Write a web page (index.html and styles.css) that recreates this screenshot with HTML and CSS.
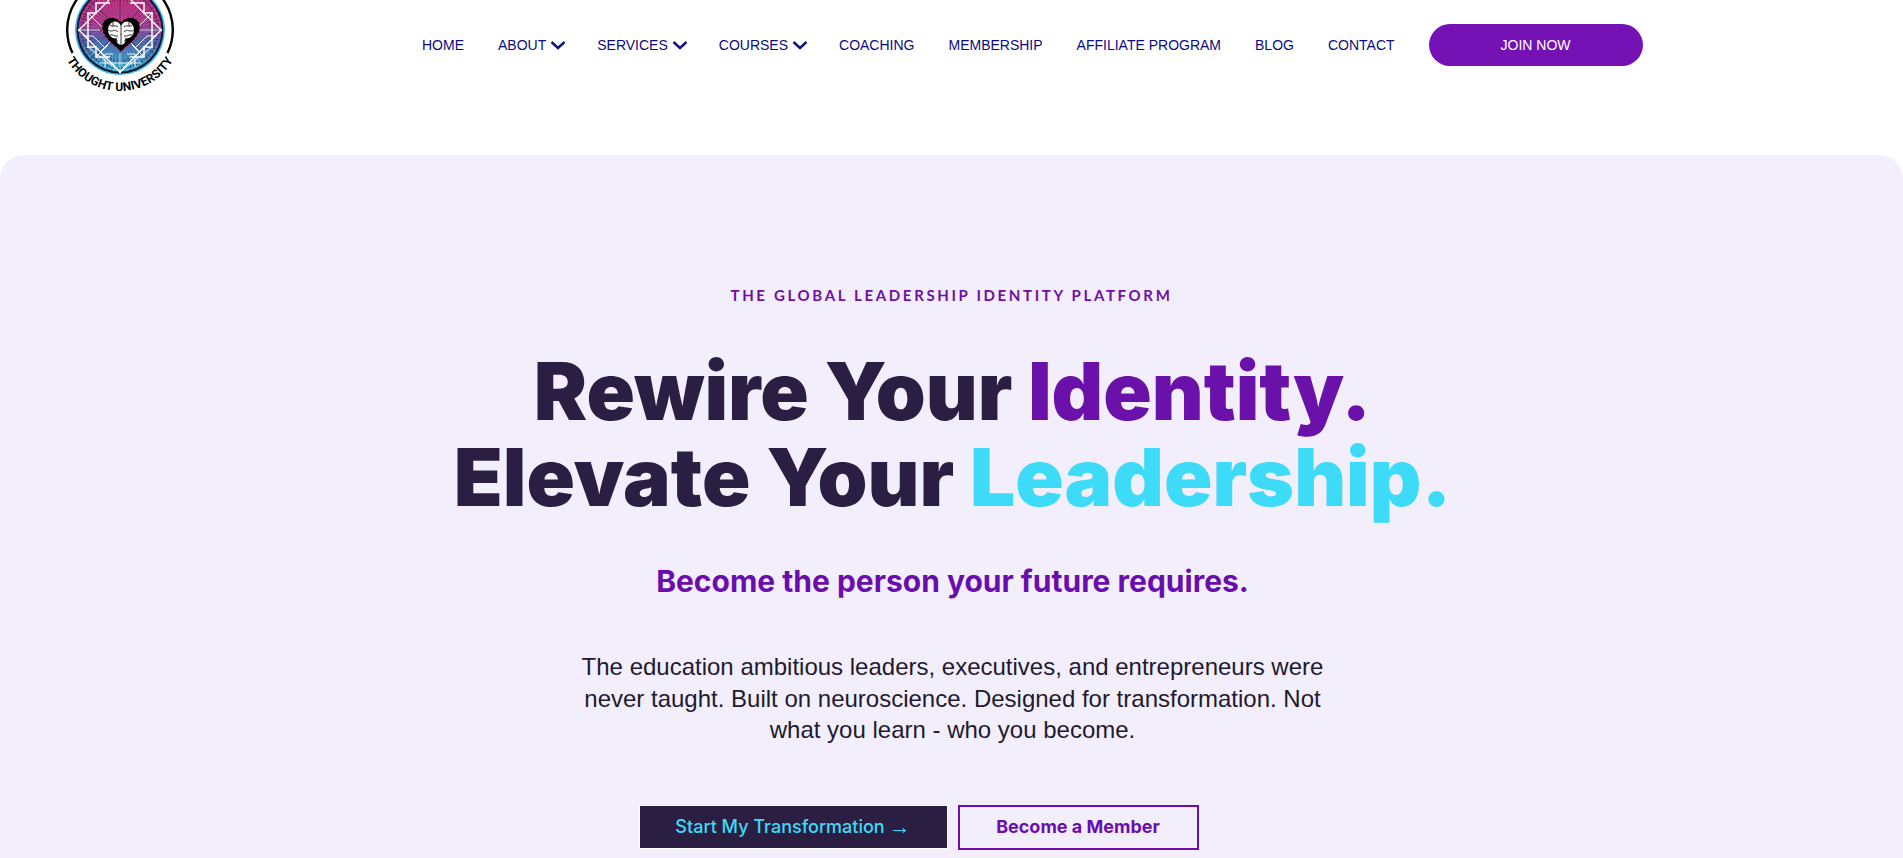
FILE: index.html
```html
<!DOCTYPE html>
<html lang="en">
<head>
<meta charset="utf-8">
<title>Thought University</title>
<link rel="stylesheet" href="styles.css">
</head>
<body>
<header class="site-header">
  <a class="logo" href="#" aria-label="Thought University">
    <svg width="130" height="100" viewBox="0 0 130 100">
      <defs>
        <linearGradient id="disc" x1="0" y1="0" x2="0" y2="1">
          <stop offset="0" stop-color="#d0307f"/>
          <stop offset=".42" stop-color="#b03f90"/>
          <stop offset=".62" stop-color="#5468b0"/>
          <stop offset="1" stop-color="#3cc4e2"/>
        </linearGradient>
        <path id="arc" d="M 7.7 50.9 A 61 61 0 0 0 122.3 50.9"/>
      </defs>
      <path d="M 17.5 53 A 52.8 52.8 0 1 1 112.5 53" fill="none" stroke="#000" stroke-width="2.4"/>
      <circle cx="65" cy="30" r="45" fill="#3fb6ea"/>
      <circle cx="65" cy="30" r="43.5" fill="#14142c"/>
      <circle cx="65" cy="30" r="41.5" fill="url(#disc)"/>
      <g fill="none" stroke="#28123e" stroke-width=".8" opacity=".6">
        <circle cx="65" cy="30" r="28" stroke-width="26" stroke-dasharray=".7 2.6" opacity=".6"/>
        <circle cx="65" cy="30" r="38" stroke-dasharray="1.5 1.5" stroke-width="2"/>
        <circle cx="65" cy="30" r="31" stroke-dasharray="1 2" stroke-width="3"/>
        <path d="M24 30H106M65 -12V72M36 1L94 59M94 1L36 59"/>
      </g>
      <g fill="none" stroke="#fff">
        <path d="M65 -11L106 30L65 72L24 30Z" stroke-width="1.4"/>
        <path d="M33 13H41V3H55M75 3H89V13H97M97 47H89V57H75M55 57H41V47H33M33 13V47M97 13V47" stroke-width="1.5"/>
        <path d="M44 -3H86M44 63H86" stroke-width=".9"/>
        <path d="M24 30H45M85 30H106M65 53V72" stroke-width=".8"/>
        <path d="M33 47L65 72L97 47M45 52L65 32M85 52L65 32M33 13L47 27M97 13L83 27" stroke-width=".9"/>
        <path d="M50 67V54H58M80 67V54H72M41 57L53 45M89 57L77 45M28 36H38L50 48M102 36H92L80 48" stroke-width=".9"/>
      </g>
      <g fill="#fff">
        <circle cx="65" cy="72" r="1.2"/><circle cx="24" cy="30" r="1.2"/><circle cx="106" cy="30" r="1.2"/>
        <circle cx="33" cy="47" r="1"/><circle cx="97" cy="47" r="1"/><circle cx="33" cy="13" r="1"/><circle cx="97" cy="13" r="1"/>
      </g>
      <path d="M66 52 C60 45 47 38 47 27 C47 17 59 14 66 22 C73 14 85 17 85 27 C85 38 72 45 66 52Z" fill="#000" stroke="#e22a82" stroke-width="1" stroke-dasharray="3 1.5"/>
      <g fill="#f6f6f6">
        <ellipse cx="60" cy="30" rx="7" ry="8.5"/>
        <ellipse cx="72" cy="30" rx="7" ry="8.5"/>
        <ellipse cx="66" cy="40" rx="4.5" ry="5"/>
      </g>
      <path d="M66 22V46M55 25C58 28 60 24 63 27M53 30C57 33 60 28 63 32M55 35C58 34 60 37 63 36M60 41C61 39 62 41 63 41M77 25C74 28 72 24 69 27M79 30C75 33 72 28 69 32M77 35C74 34 72 37 69 36M72 41C71 39 70 41 69 41M58 22V26M74 22V26" fill="none" stroke="#111" stroke-width=".8"/>
      <text class="logo-text"><textPath href="#arc" startOffset="50%" text-anchor="middle">THOUGHT UNIVERSITY</textPath></text>
    </svg>
  </a>
  <nav class="main-nav">
    <a href="#">HOME</a>
    <a href="#">ABOUT<svg class="chev" viewBox="0 0 20 10" width="20" height="10"><path d="M5.5 2L12 8L18.5 2"/></svg></a>
    <a href="#">SERVICES<svg class="chev" viewBox="0 0 20 10" width="20" height="10"><path d="M5.5 2L12 8L18.5 2"/></svg></a>
    <a href="#">COURSES<svg class="chev" viewBox="0 0 20 10" width="20" height="10"><path d="M5.5 2L12 8L18.5 2"/></svg></a>
    <a href="#">COACHING</a>
    <a href="#">MEMBERSHIP</a>
    <a href="#">AFFILIATE PROGRAM</a>
    <a href="#">BLOG</a>
    <a href="#">CONTACT</a>
    <a class="join" href="#">JOIN NOW</a>
  </nav>
</header>
<main class="hero">
  <p class="eyebrow">THE GLOBAL LEADERSHIP IDENTITY PLATFORM</p>
  <h1 class="headline">Rewire Your <span class="purple">Identity.</span><br>Elevate Your <span class="cyan">Leadership.</span></h1>
  <p class="tagline">Become the person your future requires.</p>
  <p class="intro">The education ambitious leaders, executives, and entrepreneurs were never taught. Built on neuroscience. Designed for transformation. Not what you learn - who you become.</p>
  <div class="actions">
    <a class="btn btn-dark" href="#">Start My Transformation <span class="arrow">→</span></a>
    <a class="btn btn-outline" href="#">Become a Member</a>
  </div>
</main>
</body>
</html>
```
FILE: styles.css
```css
* { box-sizing: border-box; }
html, body { margin: 0; height: 100%; overflow: hidden; background: #fff; }
body { font-family: "Liberation Sans", Arial, sans-serif; }

.site-header {
  display: flex;
  align-items: flex-start;
  height: 155px;
  padding-left: 55px;
}
.logo { display: block; width: 130px; height: 100px; flex: none; }
.logo svg { display: block; }
.logo-text {
  font-family: "Roboto", sans-serif;
  font-size: 12px;
  font-weight: 700;
  letter-spacing: .1px;
  fill: #000;
}

.main-nav {
  display: flex;
  align-items: center;
  gap: 34px;
  margin: 24px 0 0 237px;
  height: 42px;
}
.main-nav a {
  display: flex;
  align-items: center;
  color: #0b0b80;
  font-size: 14px;
  text-decoration: none;
  white-space: nowrap;
}
.chev { margin-right: -3px; fill: none; stroke: #12127a; stroke-width: 2.4; }
.main-nav .join {
  justify-content: center;
  width: 214px;
  height: 42px;
  border-radius: 21px;
  background: #7512b5;
  color: #fff;
}

.hero {
  height: 703px;
  padding-top: 131px;
  border-radius: 24px 24px 0 0;
  background: #f3eefc;
  text-align: center;
}
.eyebrow {
  margin: 0;
  color: #6f0fa8;
  font-family: "Lato", sans-serif;
  font-size: 15px;
  font-weight: 700;
  line-height: 18px;
  letter-spacing: 2.65px;
}
.headline {
  margin: 44px 0 0;
  padding-left: 2px;
  color: #2a1f42;
  font-family: "Inter", sans-serif;
  font-size: 80px;
  font-weight: 900;
  line-height: 86px;
}
.purple { color: #6a11a9; }
.cyan { color: #3edbf8; }
.tagline {
  margin: 41px 0 0;
  padding-left: 2px;
  color: #6a0dad;
  font-family: "Inter", sans-serif;
  font-size: 30px;
  font-weight: 700;
  line-height: 40px;
}
.intro {
  width: 760px;
  margin: 50px auto 0;
  padding-left: 2px;
  color: #1f1a30;
  font-size: 24px;
  line-height: 31.5px;
}
.actions {
  display: flex;
  justify-content: center;
  align-items: center;
  gap: 10px;
  margin-top: 59px;
  padding-right: 66px;
}
.btn {
  display: flex;
  align-items: center;
  justify-content: center;
  gap: 4px;
  font-family: "Inter", sans-serif;
  font-size: 18px;
  line-height: 22px;
  text-decoration: none;
}
.arrow { font-family: "Liberation Sans", sans-serif; font-size: 22px; font-weight: 400; }
.btn-dark {
  width: 309px;
  height: 44px;
  background: #2a1f42;
  border: 1px solid #fff;
  color: #3edbf8;
  font-weight: 500;
}
.btn-outline {
  width: 241px;
  height: 45px;
  border: 2px solid #6a0dad;
  color: #6a0dad;
  font-weight: 700;
}
```
